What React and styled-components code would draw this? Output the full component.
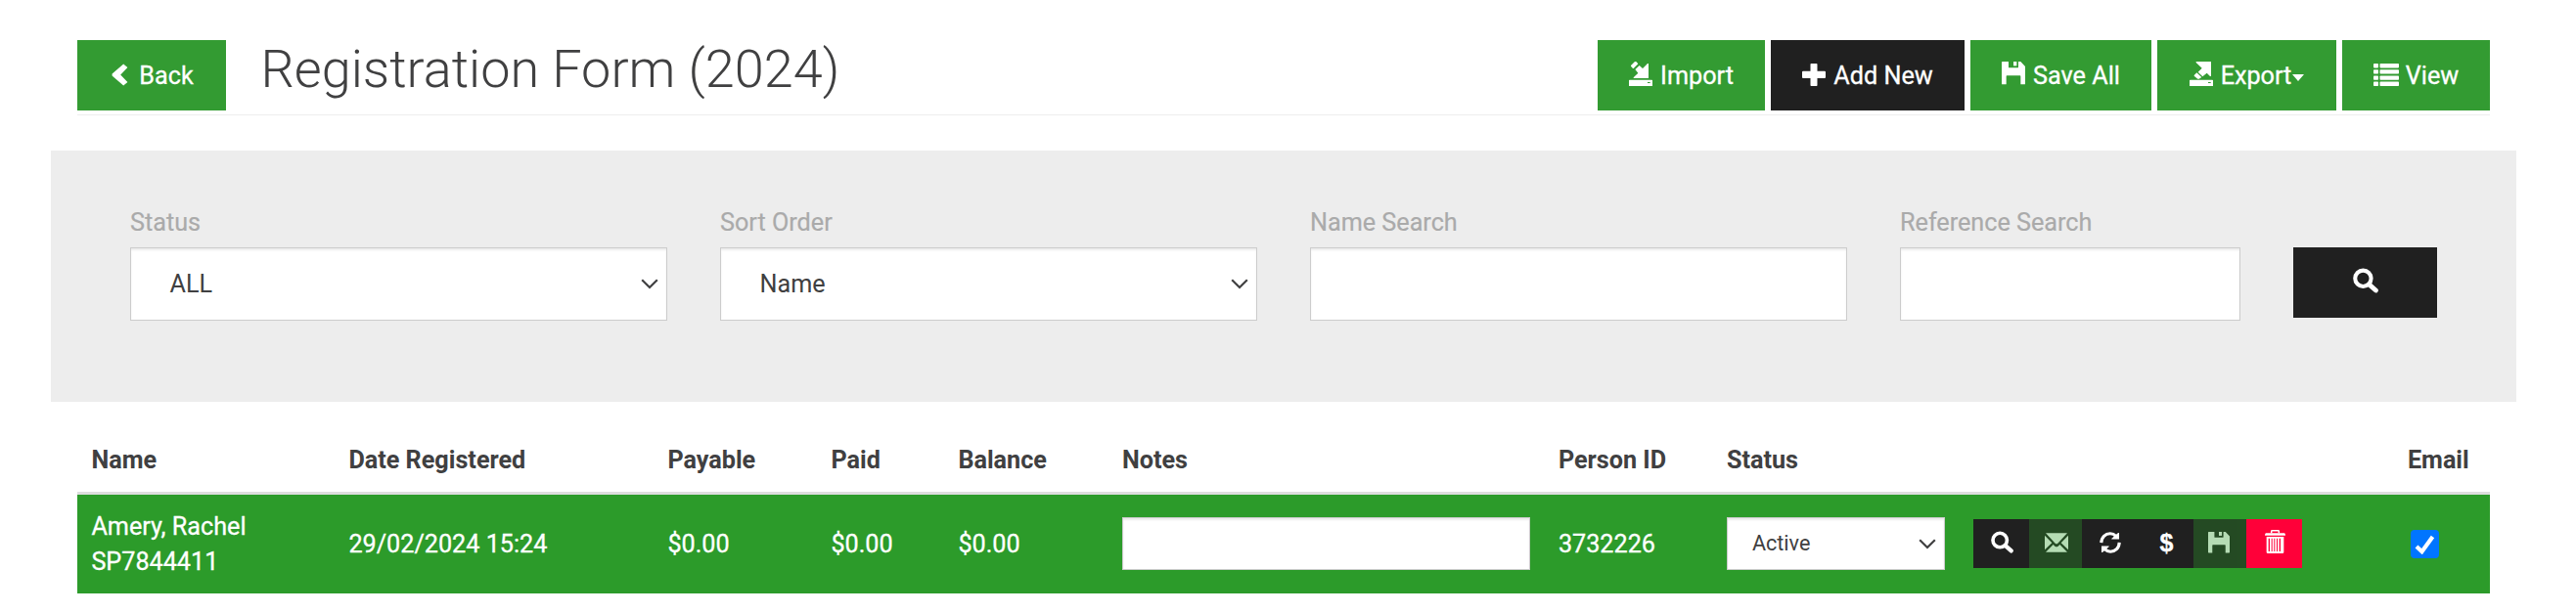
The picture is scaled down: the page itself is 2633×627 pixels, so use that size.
import styled, { createGlobalStyle, css } from "styled-components";

const GlobalStyle = createGlobalStyle`
  * {
    box-sizing: border-box;
  }

  body {
    margin: 0;
    background: #fff;
    color: #404041;
    font-family: Roboto, "Liberation Sans", sans-serif;
    font-size: 25.2px;
    line-height: 36px;
  }
`;

const Page = styled.main`
  padding: 41px 61px 0 52px;
`;

/* header */

const Header = styled.header`
  display: flex;
  align-items: flex-start;
  height: 77px;
  margin: 0 27px;
  border-bottom: 1px solid #eee;
`;

const Title = styled.h1`
  flex: 1;
  margin: 0 0 0 35.5px;
  font-size: 54px;
  font-weight: 300;
  line-height: 59px;
`;

const Toolbar = styled.div`
  display: flex;
  gap: 6px;
`;

const Button = styled.button`
  display: flex;
  align-items: center;
  justify-content: center;
  width: ${(props) => props.$width}px;
  height: 72px;
  padding: 0 0 0 ${(props) => props.$indent ?? 0}px;
  border: none;
  background: ${(props) => (props.$dark ? "#202020" : "#339b32")};
  color: #fff;
  font: inherit;
  white-space: nowrap;
`;

const Label = styled.span`
  margin-left: ${(props) => props.$gap ?? 8}px;
  padding-top: 2px;
  -webkit-text-stroke: 0.3px;
`;

const Svg = styled.svg`
  flex: none;
  width: ${(props) => props.$w}px;
  height: ${(props) => props.$h}px;
  margin-bottom: ${(props) => props.$raise ?? 0}px;
  fill: currentColor;
`;

/* filter */

const Filter = styled.section`
  display: grid;
  grid-template-columns: 549px 549px 549px 348px 147px;
  column-gap: 54px;
  align-items: start;
  height: 257px;
  margin-top: 36px;
  padding: 56px 0 0 81px;
  background: #ededed;
`;

const Field = styled.label`
  display: flex;
  flex-direction: column;
  gap: 7px;
  color: #aaa;
  -webkit-text-stroke: 0.2px;
`;

const controlStyle = css`
  width: 100%;
  border: 1px solid #ccc;
  border-radius: 0;
  background: #fff;
  box-shadow: inset 0 2px 2px rgba(0, 0, 0, 0.075);
  color: #404041;
`;

const Input = styled.input`
  ${controlStyle}
  display: block;
  height: ${(props) => (props.$small ? 54 : 75)}px;
  margin-bottom: ${(props) => (props.$small ? 1 : 0)}px;
  outline: none;
`;

const SelectBox = styled.div`
  ${controlStyle}
  display: flex;
  align-items: center;
  justify-content: space-between;
  height: ${(props) => (props.$small ? 54 : 75)}px;
  margin-bottom: ${(props) => (props.$small ? 1 : 0)}px;
  padding: ${(props) => (props.$small ? "0 8px 0 25px" : "0 8px 0 39.6px")};
  font-size: ${(props) => (props.$small ? 21.6 : 25.2)}px;
  -webkit-text-stroke: 0;
`;

const SearchButton = styled(Button)`
  margin-top: 43px;
  padding-bottom: 5px;
`;

/* table */

const Table = styled.table`
  width: 2466px;
  margin: 27px 27px 0;
  border-collapse: separate;
  border-spacing: 0;
  table-layout: fixed;
`;

const Th = styled.th`
  height: 68px;
  padding: 15px 0 14px 14.4px;
  border-bottom: 3px solid #ddd;
  font-weight: 700;
  text-align: left;
`;

const Td = styled.td`
  height: 101px;
  padding: 0 14.4px;
  background: #2c9b2a;
  color: #fff;
  white-space: nowrap;
  -webkit-text-stroke: 0.3px;
`;

const Actions = styled.div`
  display: flex;
  margin-bottom: 1px;
`;

const Action = styled.button`
  display: flex;
  align-items: center;
  justify-content: center;
  width: ${(props) => (props.disabled ? 54 : 57)}px;
  height: 50px;
  padding: 0 ${(props) => props.$inset ?? 0}px 3px 2px;
  border: none;
  background: ${(props) => (props.$danger ? "#ff0039" : "#202020")};
  color: #fff;
  opacity: ${(props) => (props.disabled ? 0.65 : 1)};
`;

const Dollar = styled.span`
  font: 700 25px/24px "Liberation Sans", sans-serif;
`;

const CheckBox = styled.span`
  display: flex;
  align-items: center;
  justify-content: center;
  width: 29px;
  height: 29px;
  margin-left: 3px;
  border-radius: 4px;
  background: #0075ff;
`;

/* icons */

function ChevronLeft() {
  return (
    <Svg $w={17} $h={23} $raise={1} viewBox="0 0 17 23">
      <path d="M12.2.4 16.4 4 9.2 11.5 16.4 19 12.2 22.6.6 12.4V10.6Z" />
    </Svg>
  );
}

function SearchIcon({ size = 23 }) {
  return (
    <Svg $w={size} $h={size} viewBox="0 0 70 68">
      <circle cx="28" cy="28" r="22" fill="none" stroke="currentColor" strokeWidth="11" />
      <path d="M45 45 63 61" stroke="currentColor" strokeWidth="13" strokeLinecap="round" />
    </Svg>
  );
}

function SaveIcon({ size = 24, raise = 4 }) {
  return (
    <Svg $w={size} $h={size} $raise={raise} viewBox="0 0 72 72">
      <path d="M2 0H21V17Q21 19 23 19H48Q51 19 51 17V0H58L72 15V68Q72 70 70 70H58V45Q58 43 56 43H16Q14 43 14 45V70H2Q0 70 0 68V2Q0 0 2 0Z" />
      <path d="M36 0H46V13H36Z" />
    </Svg>
  );
}

function ImportIcon() {
  return (
    <Svg $w={24} $h={25} $raise={3} viewBox="0 0 72 75">
      <path d="M6 12 18 0H22L28 7 14 21H12L6 14Z" />
      <path d="M19 24 32 12 42 21 57 6H60V51H14V49L28 35Z" />
      <path d="M2 56H70Q72 56 72 58V75H0V58Q0 56 2 56ZM57 63V66H65V63Z" fillRule="evenodd" />
    </Svg>
  );
}

function ExportIcon() {
  return (
    <Svg $w={24} $h={25} $raise={3} viewBox="0 0 72 75">
      <path d="M20 0H66V45H63L53 35 40 46 26 32 38 20 20 3Z" />
      <path d="M14 42 22 34 37 48 29 53H25L14 44Z" />
      <path d="M2 56H70Q72 56 72 58V75H0V58Q0 56 2 56ZM57 63V66H65V63Z" fillRule="evenodd" />
    </Svg>
  );
}

function PlusIcon() {
  return (
    <Svg $w={24} $h={23} $raise={1} viewBox="0 0 24 23">
      <path d="M9.3 0H14.7Q15.5 0 15.5.8V7.8H23Q24 7.8 24 8.8V14Q24 15 23 15H15.5V22.2Q15.5 23 14.7 23H9.3Q8.5 23 8.5 22.2V15H1Q0 15 0 14V8.8Q0 7.8 1 7.8H8.5V.8Q8.5 0 9.3 0Z" />
    </Svg>
  );
}

function ListIcon() {
  return (
    <Svg $w={26} $h={23} $raise={1} viewBox="0 0 26 23">
      {[0, 6.2, 12.4, 18.6].map((y) => (
        <g key={y}>
          <rect x="0" y={y} width="5" height="4.4" rx=".8" />
          <rect x="6.5" y={y} width="19.5" height="4.4" rx=".8" />
        </g>
      ))}
    </Svg>
  );
}

const Caret = styled.span`
  margin: 5px 0 0 1px;
  border: 6.5px solid transparent;
  border-top: 7px solid currentColor;
  border-bottom: none;
`;

function SelectArrow() {
  return (
    <Svg $w={18} $h={11} viewBox="0 0 18 11">
      <path d="M1.2 1.2 9 9 16.8 1.2" fill="none" stroke="currentColor" strokeWidth="2.2" />
    </Svg>
  );
}

function MailIcon() {
  return (
    <Svg $w={24} $h={20} viewBox="0 0 72 60">
      <path d="M3 1H69L40 32Q36 36 32 32Z" />
      <path d="M0 8 22 31 0 52ZM72 8 50 31 72 52Z" />
      <path d="M3 59 26 36 31 41Q36 45 41 41L46 36 69 59Z" />
    </Svg>
  );
}

function RefreshIcon() {
  return (
    <Svg $w={22} $h={22} viewBox="0 0 67 67">
      <path
        d="M5.5 34C6 16 18 5.5 33 5.5C41 5.5 47 9 52 14M61.5 33C61 51 49 61.5 34 61.5C26 61.5 20 58 15 53"
        fill="none"
        stroke="currentColor"
        strokeWidth="9.5"
      />
      <path d="M61 3V23H38L37 21 58 3ZM6 64V44H29L30 46 9 64Z" />
    </Svg>
  );
}

function TrashIcon() {
  return (
    <Svg $w={21} $h={24} $raise={1} viewBox="0 0 63 72">
      <path d="M20 10V5Q20 2 23 2H40Q43 2 43 5V10" fill="none" stroke="currentColor" strokeWidth="4.5" />
      <path d="M3 10H60Q63 11 63 17H0Q0 11 3 10Z" />
      <path
        d="M5 21H58V68Q58 72 54 72H9Q5 72 5 68ZM11 26V66H15V26ZM20 26V66H23V26ZM28 26V66H31V26ZM36 26V66H39V26ZM44 26V66H48V26Z"
        fillRule="evenodd"
      />
    </Svg>
  );
}

function CheckIcon() {
  return (
    <Svg $w={21} $h={20} viewBox="0 0 21 20">
      <path d="M2 12 7.5 17.2 18.5 2" fill="none" stroke="#fff" strokeWidth="4.2" />
    </Svg>
  );
}

const columns = [
  { name: "Name", width: 263 },
  { name: "Date Registered", width: 326 },
  { name: "Payable", width: 167 },
  { name: "Paid", width: 130 },
  { name: "Balance", width: 167.5 },
  { name: "Notes", width: 446 },
  { name: "Person ID", width: 172 },
  { name: "Status", width: 252 },
  { name: "", width: 444 },
  { name: "Email", width: 98.5 },
];

function App() {
  return (
    <>
      <GlobalStyle />
      <Page>
        <Header>
          <Button $width={152} $indent={2}>
            <ChevronLeft />
            <Label $gap={11}>Back</Label>
          </Button>
          <Title>Registration Form (2024)</Title>
          <Toolbar>
            <Button $width={171}>
              <ImportIcon />
              <Label>Import</Label>
            </Button>
            <Button $width={198} $dark>
              <PlusIcon />
              <Label>Add New</Label>
            </Button>
            <Button $width={185}>
              <SaveIcon />
              <Label>Save All</Label>
            </Button>
            <Button $width={183}>
              <ExportIcon />
              <Label>Export</Label>
              <Caret />
            </Button>
            <Button $width={151}>
              <ListIcon />
              <Label $gap={7}>View</Label>
            </Button>
          </Toolbar>
        </Header>

        <Filter>
          <Field as="div">
            Status
            <SelectBox>
              ALL
              <SelectArrow />
            </SelectBox>
          </Field>
          <Field as="div">
            Sort Order
            <SelectBox>
              Name
              <SelectArrow />
            </SelectBox>
          </Field>
          <Field>
            Name Search
            <Input />
          </Field>
          <Field>
            Reference Search
            <Input />
          </Field>
          <SearchButton $width={147} $dark>
            <SearchIcon size={26} />
          </SearchButton>
        </Filter>

        <Table>
          <colgroup>
            {columns.map(({ name, width }) => (
              <col key={name} style={{ width }} />
            ))}
          </colgroup>
          <thead>
            <tr>
              {columns.map(({ name }) => (
                <Th key={name}>{name}</Th>
              ))}
            </tr>
          </thead>
          <tbody>
            <tr>
              <Td>
                Amery, Rachel
                <br />
                SP7844411
              </Td>
              <Td>29/02/2024 15:24</Td>
              <Td>$0.00</Td>
              <Td>$0.00</Td>
              <Td>$0.00</Td>
              <Td>
                <Input $small />
              </Td>
              <Td>3732226</Td>
              <Td>
                <SelectBox $small>
                  Active
                  <SelectArrow />
                </SelectBox>
              </Td>
              <Td>
                <Actions>
                  <Action>
                    <SearchIcon />
                  </Action>
                  <Action disabled>
                    <MailIcon />
                  </Action>
                  <Action>
                    <RefreshIcon />
                  </Action>
                  <Action>
                    <Dollar>$</Dollar>
                  </Action>
                  <Action disabled $inset={4}>
                    <SaveIcon size={22} raise={0} />
                  </Action>
                  <Action $danger>
                    <TrashIcon />
                  </Action>
                </Actions>
              </Td>
              <Td>
                <CheckBox>
                  <CheckIcon />
                </CheckBox>
              </Td>
            </tr>
          </tbody>
        </Table>
      </Page>
    </>
  );
}

export default App;
